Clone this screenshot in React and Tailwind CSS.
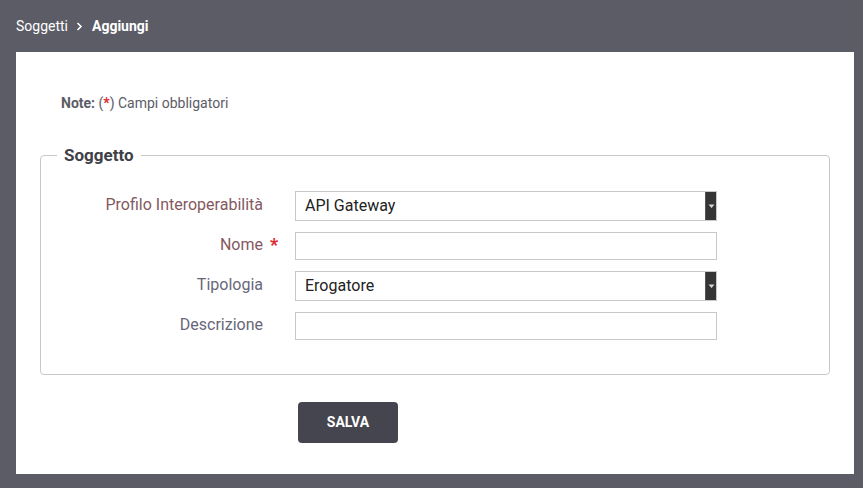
const Row = ({ label, required, reqColor, children }) => (
  <div className="flex items-center h-10">
    <div className="w-[206px] shrink-0 text-right relative pb-[3px]">
      <span className={`text-[16px] ${reqColor ? 'text-[#845861]' : 'text-[#676779]'}`}>{label}</span>
      {required && (
        <span className="absolute left-[213px] top-[-2px] text-[18px] font-bold text-[#e0262c]">*</span>
      )}
    </div>
    <div className="ml-8">{children}</div>
  </div>
);

const Select = ({ value }) => (
  <div className="w-[422px] h-[30px] border border-[#c8c8c8] bg-white flex items-stretch">
    <div className="flex-1 flex items-center pl-[9px] text-[16px] text-[#222]">{value}</div>
    <div className="w-[11px] bg-[#353535] flex items-center justify-center border-l border-[#555]">
      <svg width="7" height="5" viewBox="0 0 7 5">
        <path d="M0.5 0.5 L6.5 0.5 L3.5 4 Z" fill="#d8d8d8" />
      </svg>
    </div>
  </div>
);

const Input = () => (
  <div className="w-[422px] h-[28px] border border-[#c8c8c8] bg-white" />
);

export default function App() {
  return (
    <div className="w-[863px] h-[488px] bg-[#5c5c66] font-['Roboto',sans-serif] flex flex-col">
      {/* Breadcrumb */}
      <div className="h-[52px] flex items-center pl-4 text-[14px] text-white">
        <span>Soggetti</span>
        <svg className="ml-[8px] mr-[9px]" width="7" height="9" viewBox="0 0 7 9">
          <path d="M1.5 1 L5 4.5 L1.5 8" fill="none" stroke="#fff" strokeWidth="1.6" />
        </svg>
        <span className="font-bold">Aggiungi</span>
      </div>

      {/* Panel */}
      <div className="ml-4 mr-[9px] h-[422px] bg-white px-6 pt-[41px]">
        <p className="text-[14px] leading-[20px] text-[#5c5c66] pl-[21px]">
          <span className="font-bold">Note:</span> (<span className="text-[#e0262c] font-bold">*</span>) Campi obbligatori
        </p>

        <fieldset className="mt-[32px] border border-[#c8c8c8] rounded-[4px] px-4 pt-[21px] pb-[28px]">
          <legend className="px-[7px] text-[17px] font-bold text-[#3f3f48] leading-5">Soggetto</legend>
          <Row label="Profilo Interoperabilità" reqColor>
            <Select value="API Gateway" />
          </Row>
          <Row label="Nome" required reqColor>
            <Input />
          </Row>
          <Row label="Tipologia">
            <Select value="Erogatore" />
          </Row>
          <Row label="Descrizione">
            <Input />
          </Row>
        </fieldset>

        <button className="mt-[27px] ml-[258px] w-[100px] h-[41px] rounded-[4px] bg-[#45454f] text-white text-[14px] font-bold">
          SALVA
        </button>
      </div>
    </div>
  );
}
